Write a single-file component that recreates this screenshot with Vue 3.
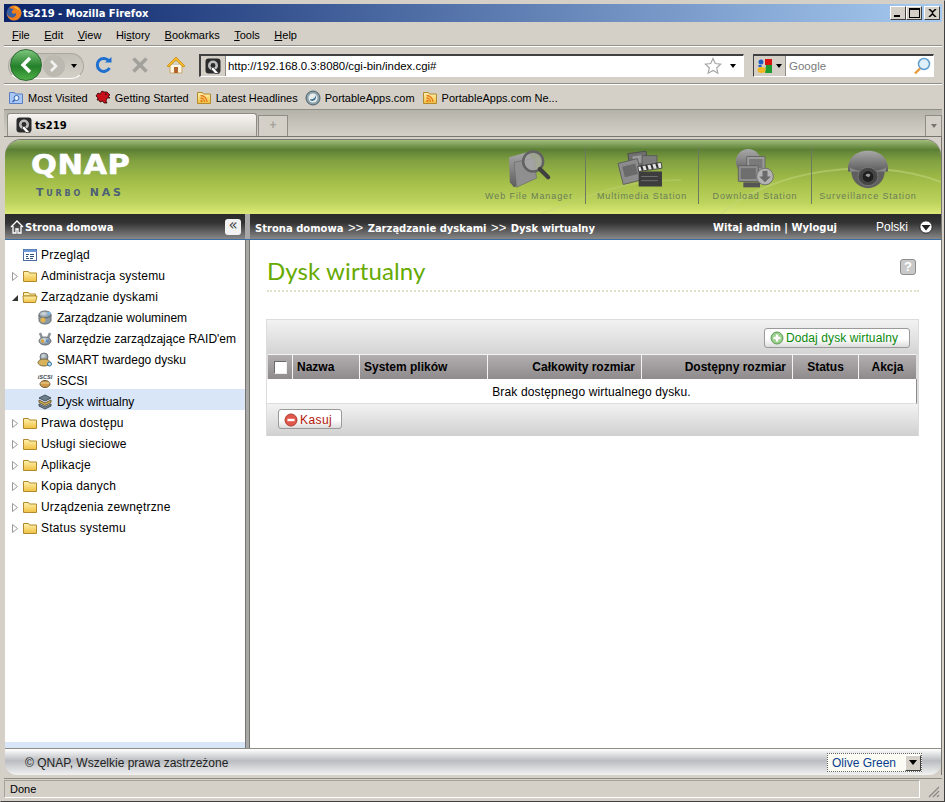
<script setup>
const menus = [
  { label: "File", key: "F", rest: "ile" },
  { label: "Edit", key: "E", rest: "dit" },
  { label: "View", key: "V", rest: "iew" },
  { label: "History", pre: "Hi", key: "s", rest: "tory" },
  { label: "Bookmarks", key: "B", rest: "ookmarks" },
  { label: "Tools", key: "T", rest: "ools" },
  { label: "Help", key: "H", rest: "elp" },
];

const bookmarks = [
  { icon: "i-bluefolder", text: "Most Visited" },
  { icon: "i-dino", text: "Getting Started" },
  { icon: "i-rss", text: "Latest Headlines" },
  { icon: "i-portable", text: "PortableApps.com" },
  { icon: "i-rss", text: "PortableApps.com Ne..." },
];

const stations = [
  { icon: "i-webfile", text: "Web File Manager" },
  { icon: "i-multi", text: "Multimedia Station" },
  { icon: "i-download", text: "Download Station" },
  { icon: "i-camera", text: "Surveillance Station" },
];

// arrow: "" none, "closed", "open"
const tree = [
  { text: "Przegląd", icon: "i-overview", level: 0, arrow: "", top: true },
  { text: "Administracja systemu", icon: "i-folder", level: 0, arrow: "closed" },
  { text: "Zarządzanie dyskami", icon: "i-folderopen", level: 0, arrow: "open" },
  { text: "Zarządzanie woluminem", icon: "i-volume", level: 1 },
  { text: "Narzędzie zarządzające RAID'em", icon: "i-raid", level: 1 },
  { text: "SMART twardego dysku", icon: "i-smart", level: 1 },
  { text: "iSCSI", icon: "i-iscsi", level: 1 },
  { text: "Dysk wirtualny", icon: "i-virtual", level: 1, selected: true },
  { text: "Prawa dostępu", icon: "i-folder", level: 0, arrow: "closed" },
  { text: "Usługi sieciowe", icon: "i-folder", level: 0, arrow: "closed" },
  { text: "Aplikacje", icon: "i-folder", level: 0, arrow: "closed" },
  { text: "Kopia danych", icon: "i-folder", level: 0, arrow: "closed" },
  { text: "Urządzenia zewnętrzne", icon: "i-folder", level: 0, arrow: "closed" },
  { text: "Status systemu", icon: "i-folder", level: 0, arrow: "closed" },
];

const columns = [
  { text: "Nazwa", cls: "left" },
  { text: "System plików", cls: "left" },
  { text: "Całkowity rozmiar", cls: "right" },
  { text: "Dostępny rozmiar", cls: "right" },
  { text: "Status", cls: "mid" },
  { text: "Akcja", cls: "mid" },
];
</script>

<template>
  <div class="win">
    <svg class="defs" width="0" height="0" aria-hidden="true">
      <defs>
        <linearGradient id="g-folder" x1="0" y1="0" x2="0" y2="1">
          <stop offset="0" stop-color="#fff2b0" />
          <stop offset="1" stop-color="#f0c040" />
        </linearGradient>
        <linearGradient id="g-grey" x1="0" y1="0" x2="0" y2="1">
          <stop offset="0" stop-color="#a8a8a8" />
          <stop offset="1" stop-color="#5c5c5c" />
        </linearGradient>
        <radialGradient id="g-disk" cx="0.4" cy="0.35" r="0.7">
          <stop offset="0" stop-color="#d8dfe4" />
          <stop offset="1" stop-color="#6f7f8a" />
        </radialGradient>
      </defs>
      <symbol id="i-folder" viewBox="0 0 16 16">
        <path d="M1.5 3.5h5l1 1.5h7v8.500h-13z" fill="url(#g-folder)" stroke="#b08a2c" />
      </symbol>
      <symbol id="i-folderopen" viewBox="0 0 16 16">
        <path d="M1.5 3.5h5l1 1.5h6v2h-12z" fill="#fff2b0" stroke="#b08a2c" />
        <path d="M1 7h14l-1.5 6.5h-12z" fill="url(#g-folder)" stroke="#b08a2c" />
      </symbol>
      <symbol id="i-overview" viewBox="0 0 16 16">
        <rect x="1.5" y="2.5" width="13" height="11" fill="#fff" stroke="#4a6a9c" />
        <rect x="1.5" y="2.5" width="13" height="2.5" fill="#6f9ad8" />
        <path d="M4 7.500h3M8 7.500h4M4 9.500h2M8 9.500h4M4 11.500h3M8 11.500h3" stroke="#34507c" />
      </symbol>
      <symbol id="i-volume" viewBox="0 0 16 16">
        <ellipse cx="8" cy="4.5" rx="6" ry="3.5" fill="url(#g-disk)" stroke="#6a6f74" />
        <path d="M2 5v5.5c0 2 3 3.5 6 3.5s6-1.5 6-3.5V5c0 2-3 3-6 3S2 7 2 5z" fill="#8a9aa4" stroke="#6a6f74" />
        <circle cx="6" cy="10" r="2.5" fill="#e2b34a" />
        <circle cx="12" cy="3.5" r="1.800" fill="#7eb4e0" />
      </symbol>
      <symbol id="i-raid" viewBox="0 0 16 16">
        <path d="M3 2l2 5M13 2l-2 5" stroke="#8c9298" stroke-width="2.5" />
        <ellipse cx="8" cy="10" rx="6" ry="4" fill="url(#g-disk)" stroke="#6a6f74" />
        <circle cx="5.5" cy="10" r="1.700" fill="#d9a23a" />
        <circle cx="10.5" cy="10" r="1.700" fill="#5f8fc0" />
      </symbol>
      <symbol id="i-smart" viewBox="0 0 16 16">
        <circle cx="7" cy="5" r="4" fill="url(#g-disk)" stroke="#6a6f74" />
        <ellipse cx="7" cy="10.5" rx="6" ry="3.5" fill="#d9b25c" stroke="#7a6a44" />
        <circle cx="12.5" cy="12" r="2" fill="#bfe0f5" stroke="#27709c" />
      </symbol>
      <symbol id="i-iscsi" viewBox="0 0 16 16">
        <ellipse cx="8" cy="11" rx="5" ry="3.5" fill="#cf9a4a" stroke="#6e5a38" />
        <path d="M3.5 10h9" stroke="#f0d79a" />
      </symbol>
      <symbol id="i-virtual" viewBox="0 0 16 16">
        <path d="M8 1l6 3-6 3-6-3z" fill="#6c7f8f" stroke="#465058" />
        <path d="M2 6l6 3 6-3v2.5l-6 3-6-3z" fill="#d8b050" stroke="#6a5a38" />
        <path d="M2 10l6 3 6-3v2l-6 3-6-3z" fill="#7a8a96" stroke="#465058" />
      </symbol>
      <symbol id="i-bluefolder" viewBox="0 0 16 16">
        <path d="M1.5 2.5h5l1 1.500h7v9.500h-13z" fill="#a9c8f5" stroke="#5a7fc0" />
        <circle cx="8.5" cy="8" r="2.5" fill="#e8f2ff" stroke="#3464b0" />
        <path d="M6.5 10l-2 2" stroke="#3464b0" stroke-width="1.5" />
      </symbol>
      <symbol id="i-dino" viewBox="0 0 16 16">
        <path d="M1 6l2-3 2 1 2-3 2 1 3 0 3 3-2 1 2 2-3 0-1 3 1 2-3 0-1-2-3 1-1-2-2 0 1-2z" fill="#c8101a" stroke="#300" stroke-width="0.8" />
        <path d="M10 4l1.5.5" stroke="#111" />
      </symbol>
      <symbol id="i-rss" viewBox="0 0 16 16">
        <path d="M1.5 2.5h5l1 1.500h7v9.500h-13z" fill="url(#g-folder)" stroke="#b08a2c" />
        <circle cx="5.5" cy="11" r="1.200" fill="#e8791a" />
        <path d="M4.5 8a4 4 0 0 1 4 4M4.5 5.500a6.500 6.500 0 0 1 6.500 6.500" fill="none" stroke="#e8791a" stroke-width="1.400" />
      </symbol>
      <symbol id="i-portable" viewBox="0 0 16 16">
        <circle cx="8" cy="8" r="7" fill="#8ea2ab" stroke="#4e616a" />
        <circle cx="8" cy="8" r="4.5" fill="#e8eef0" />
        <path d="M5 9c3 1 5-1 6-4 .5 3-1 6-4 6-1 0-2-1-2-2z" fill="#3b6e8c" />
      </symbol>
      <symbol id="i-qnap" viewBox="0 0 16 16">
        <rect x="0.5" y="0.5" width="15" height="15" rx="3" fill="#2b2b2b" />
        <circle cx="8" cy="7.5" r="5" fill="#bcbcbc" />
        <circle cx="8" cy="7.5" r="2.400" fill="#2b2b2b" />
        <path d="M8 9l6 6.500H10L6 11z" fill="#fff" stroke="#2b2b2b" stroke-width="0.7" />
      </symbol>
      <symbol id="i-webfile" viewBox="0 0 64 48">
        <path d="M8 10l22-6 4 5 4 26-24 11-5-6z" fill="url(#g-grey)" />
        <path d="M14 16l24-5 3 24-24 11z" fill="#8f8f8f" stroke="#666" stroke-width="0.7" />
        <circle cx="37" cy="15" r="12" fill="#a7a7a7" fill-opacity="0.8" stroke="#626262" stroke-width="3" />
        <path d="M45 24l10 10" stroke="#3f3f3f" stroke-width="5" stroke-linecap="round" />
      </symbol>
      <symbol id="i-multi" viewBox="0 0 64 48">
        <rect x="16" y="4" width="22" height="17" transform="rotate(-8 27 12)" fill="#6f6f6f" stroke="#4a4a4a" />
        <rect x="21" y="8" width="12" height="9" transform="rotate(-8 27 12)" fill="#9a9a9a" />
        <rect x="6" y="14" width="24" height="26" transform="rotate(-14 18 27)" fill="#8c8c8c" stroke="#5a5a5a" />
        <rect x="10" y="19" width="16" height="13" transform="rotate(-14 18 27)" fill="#6a6a6a" />
        <rect x="32" y="8" width="18" height="14" fill="#7c7c7c" stroke="#555" />
        <rect x="28" y="27" width="28" height="18" fill="#3d3d3d" />
        <path d="M27 21l28-5 1 7-28 4z" fill="#e4e4e4" stroke="#333" />
        <path d="M31 20l2 6M37 19l2 6M43 18l2 6M49 17l2 6" stroke="#333" stroke-width="2.5" />
        <path d="M31 33h20M31 38h20" stroke="#777" />
      </symbol>
      <symbol id="i-download" viewBox="0 0 64 48">
        <circle cx="24" cy="15" r="15" fill="url(#g-grey)" />
        <rect x="22" y="9" width="22" height="17" rx="1" fill="#9b9b9b" stroke="#5f5f5f" />
        <rect x="25" y="12" width="16" height="11" fill="#7a7a7a" />
        <rect x="12" y="20" width="24" height="19" rx="1" fill="#8e8e8e" stroke="#5a5a5a" />
        <rect x="15" y="23" width="18" height="13" fill="#6e6e6e" />
        <rect x="18" y="40" width="20" height="6" fill="#555" />
        <circle cx="44" cy="33" r="10" fill="#b3b3b3" stroke="#676767" />
        <path d="M41 26h6v7h4l-7 7-7-7h4z" fill="#6a6a6a" />
      </symbol>
      <symbol id="i-camera" viewBox="0 0 64 48">
        <path d="M8 22c0-4 2-8 4-11 4-6 12-9 20-9s16 3 20 9c2 3 4 7 4 11v5H8z" fill="url(#g-grey)" />
        <path d="M10 22c6 4 14 5 22 5s16-1 22-5l-1 6H11z" fill="#8a8a8a" />
        <path d="M12 27h40c0 11-9 20-20 20S12 38 12 27z" fill="#5f5f5f" />
        <ellipse cx="32" cy="33" rx="12" ry="11" fill="#454545" stroke="#7d7d7d" />
        <circle cx="32" cy="33" r="6.500" fill="#1f1f1f" />
        <path d="M29 32a3.500 3.500 0 0 1 6-1l-2 3z" fill="#9e9e9e" />
      </symbol>
    </svg>

    <header class="titlebar">
      <svg class="title-icon" viewBox="0 0 16 16" width="16" height="16">
        <circle cx="8" cy="8" r="7.5" fill="#3a5f9e" />
        <path d="M8 .5c4 0 7.5 3.500 7.5 7.500S12 15.500 8 15.500 1 12 .8 8C1.500 11 4 13 7 12.500c2.500-.5 3.500-2.500 3-4.500C9 9 7 9 6 8c-.5-2 .5-3 2-3.500C6 3.500 4.500 3 3 3.500 4 1.500 6 .5 8 .5z" fill="#ee7d1c" />
        <path d="M8 1.500c3 0 5.500 2 6 5-1-1.500-2.500-2.500-4-3-.8-.8-1.500-1.500-2-2z" fill="#ffc43a" />
      </svg>
      <span class="title-text">ts219 - Mozilla Firefox</span>
      <div class="win-btns">
        <button class="win-btn"><span class="min-glyph"></span></button>
        <button class="win-btn"><span class="max-glyph"></span></button>
        <button class="win-btn close-btn">
          <svg viewBox="0 0 9 8" width="9" height="8"><path d="M1 0l3.500 3L8 0M1 8l3.500-3L8 8M4.500 3v2" fill="none" stroke="#000" stroke-width="1.600" /></svg>
        </button>
      </div>
    </header>

    <nav class="menubar">
      <span v-for="m in menus" :key="m.label" class="menu-item">{{ m.pre }}<u>{{ m.key }}</u>{{ m.rest }}</span>
    </nav>

    <div class="toolbar">
      <div class="backfwd">
        <div class="fwd-pill">
          <div class="fwd-btn">
            <svg viewBox="0 0 10 12" width="10" height="12"><path d="M2 1l5 5-5 5" fill="none" stroke="#f2f2f0" stroke-width="2.6" /></svg>
          </div>
          <span class="mini-arrow"></span>
        </div>
        <div class="back-btn">
          <svg viewBox="0 0 14 18" width="14" height="18"><path d="M11 2L4 9l7 7" fill="none" stroke="#fff" stroke-width="3.4" /></svg>
        </div>
      </div>
      <svg class="tb-icon reload" viewBox="0 0 18 18" width="18" height="18">
        <path d="M14 5A6.500 6.500 0 1 0 14.500 12" fill="none" stroke="#1e6fd0" stroke-width="3" />
        <path d="M10 6.500h6.500V1z" fill="#1e6fd0" />
      </svg>
      <svg class="tb-icon stop" viewBox="0 0 18 18" width="18" height="18">
        <path d="M2.500 2.500l13 13M15.500 2.500l-13 13" stroke="#a3a19b" stroke-width="3.6" />
      </svg>
      <svg class="tb-icon home" viewBox="0 0 20 18" width="20" height="18">
        <path d="M4 9v8h12V9" fill="#fdf6e0" stroke="#c9a86a" />
        <rect x="8" y="11" width="4" height="6" fill="#b4642e" />
        <path d="M1 10l9-9 9 9-2 1-7-7-7 7z" fill="#f2bc2c" stroke="#c98a14" stroke-width="0.8" />
      </svg>
      <div class="urlbar">
        <div class="site-id"><svg width="16" height="16"><use href="#i-qnap" /></svg></div>
        <span class="url-text">http://192.168.0.3:8080/cgi-bin/index.cgi#</span>
        <svg class="star" viewBox="0 0 18 18" width="18" height="18">
          <path d="M9 1.500l2.300 5 5.400.6-4 3.700 1.100 5.400L9 13.500l-4.800 2.700 1.100-5.400-4-3.700 5.400-.6z" fill="#fff" stroke="#a5a5a5" stroke-width="1.2" />
        </svg>
        <span class="mini-arrow url-arrow"></span>
      </div>
      <div class="searchbar">
        <div class="engine">
          <svg viewBox="0 0 16 16" width="16" height="16">
            <circle cx="4" cy="4" r="2.5" fill="#1f5cc4" />
            <path d="M8 1h7v6H8z" fill="#d8140e" />
            <path d="M9 7h6v8H8z" fill="#1f9a30" />
            <ellipse cx="4.500" cy="12" rx="4" ry="3" fill="#f2b61e" />
            <rect x="1.500" y="7" width="3" height="2" fill="#1f5cc4" />
          </svg>
          <span class="mini-arrow"></span>
        </div>
        <span class="search-hint">Google</span>
        <svg class="loupe" viewBox="0 0 18 18" width="18" height="18">
          <circle cx="11" cy="7" r="5.500" fill="#dff0fb" stroke="#5e9fcf" stroke-width="1.5" />
          <path d="M7 11.500l-5 5" stroke="#e69a3c" stroke-width="2.4" />
        </svg>
      </div>
    </div>

    <div class="bookmarks">
      <span v-for="(b, i) in bookmarks" :key="i" class="bookmark">
        <svg width="16" height="16"><use :href="'#' + b.icon" /></svg>
        {{ b.text }}
      </span>
    </div>

    <div class="tabstrip">
      <div class="tab">
        <svg width="16" height="16"><use href="#i-qnap" /></svg>
        <span>ts219</span>
      </div>
      <div class="newtab">+</div>
      <div class="tab-list"><span class="mini-arrow grey"></span></div>
    </div>

    <main class="page">
      <section class="banner">
        <svg class="swoosh" viewBox="0 0 460 74" width="460" height="74">
          <path d="M240 74C290 30 390 15 460 42" fill="none" stroke="#c2d57c" stroke-opacity="0.55" stroke-width="2" />
          <path d="M60 74C110 55 140 40 200 40" fill="none" stroke="#c2d57c" stroke-opacity="0.35" stroke-width="2" />
        </svg>
        <div class="brand">
          <span class="brand-name">QNAP</span>
          <span class="brand-sub">Turbo NAS</span>
        </div>
        <div class="stations">
          <div v-for="s in stations" :key="s.text" class="station">
            <svg class="station-icon" width="64" height="48"><use :href="'#' + s.icon" /></svg>
            <span>{{ s.text }}</span>
          </div>
        </div>
      </section>

      <section class="darkbar">
        <div class="dark-left">
          <svg viewBox="0 0 14 14" width="14" height="14">
            <path d="M1 7l6-6 6 6M3 6v7h3V9h2v4h3V6" fill="none" stroke="#fff" stroke-width="1.3" />
          </svg>
          <strong>Strona domowa</strong>
          <span class="collapse">«</span>
        </div>
        <div class="dark-sep"></div>
        <div class="dark-right">
          <div class="crumbs">
            <strong>Strona domowa</strong><em>&gt;&gt;</em><strong>Zarządzanie dyskami</strong><em>&gt;&gt;</em><strong>Dysk wirtualny</strong>
          </div>
          <strong class="user">Witaj admin | Wyloguj</strong>
          <span class="lang">Polski</span>
          <svg class="lang-arrow" viewBox="0 0 14 14" width="14" height="14">
            <circle cx="7" cy="7" r="6.2" fill="#fff" stroke="#222" />
            <path d="M2.500 5h9L7 10.500z" fill="#222" />
          </svg>
        </div>
      </section>

      <section class="workspace">
        <aside class="sidebar">
          <ul class="tree">
            <li
              v-for="item in tree"
              :key="item.text"
              class="tree-row"
              :class="{ selected: item.selected, sub: item.level === 1, top: item.top }"
            >
              <svg v-if="item.arrow === 'closed'" class="arrow" viewBox="0 0 9 9" width="9" height="9">
                <path d="M1.500 .5l5 4-5 4z" fill="#fff" stroke="#9a9a9a" />
              </svg>
              <svg v-if="item.arrow === 'open'" class="arrow" viewBox="0 0 9 9" width="9" height="9">
                <path d="M1 8h6V2z" fill="#333" />
              </svg>
              <svg width="16" height="16" viewBox="0 0 16 16">
                <use :href="'#' + item.icon" width="16" height="16" />
                <text v-if="item.icon === 'i-iscsi'" x="8" y="5.500" text-anchor="middle" class="iscsi-label">iSCSI</text>
              </svg>
              <span class="tree-text" :class="{ spaced: item.level === 0 }">{{ item.text }}</span>
            </li>
          </ul>
          <div class="side-end"></div>
        </aside>
        <div class="splitter"></div>
        <div class="content">
          <div class="heading">
            <h1>Dysk wirtualny</h1>
            <span class="help">?</span>
          </div>
          <div class="panel">
            <div class="panel-top">
              <button class="btn add">
                <svg viewBox="0 0 14 14" width="14" height="14">
                  <circle cx="7" cy="7" r="6" fill="#9bcf8c" stroke="#5c9a58" />
                  <path d="M7 3.500v7M3.500 7h7" stroke="#fff" stroke-width="2.4" />
                </svg>
                Dodaj dysk wirtualny
              </button>
            </div>
            <div class="grid-head">
              <div class="head-cell check"><span class="checkbox"></span></div>
              <div v-for="c in columns" :key="c.text" class="head-cell" :class="c.cls">{{ c.text }}</div>
            </div>
            <div class="empty-row">Brak dostępnego wirtualnego dysku.</div>
            <div class="panel-bottom">
              <button class="btn del">
                <svg viewBox="0 0 14 14" width="14" height="14">
                  <circle cx="7" cy="7" r="6" fill="#e0584c" stroke="#b03a30" />
                  <path d="M3.500 7h7" stroke="#fff" stroke-width="2.4" />
                </svg>
                Kasuj
              </button>
            </div>
          </div>
        </div>
      </section>

      <footer class="pagefoot">
        <span class="copyright">© QNAP, Wszelkie prawa zastrzeżone</span>
        <div class="theme">
          <span>Olive Green</span>
          <span class="theme-btn"><i class="mini-arrow big"></i></span>
        </div>
      </footer>
    </main>

    <div class="statusbar">
      <div class="status-main">Done</div>
      <div class="grip">
        <svg viewBox="0 0 12 12" width="12" height="12">
          <path d="M11 1L1 11M11 5l-6 6M11 9l-2 2" stroke="#8a8780" stroke-width="1.2" />
        </svg>
      </div>
    </div>
  </div>
</template>

<style>
html,
body {
  margin: 0;
  padding: 0;
  background: #d4d0c8;
}
</style>

<style scoped>
.win {
  width: 945px;
  height: 802px;
  box-sizing: border-box;
  padding: 3px 2px 1px 3px;
  background: #d4d0c8;
  border: 1px solid;
  border-color: #d4d0c8 #404040 #404040 #d4d0c8;
  display: flex;
  flex-direction: column;
  overflow: hidden;
  font-family: "Liberation Sans", Arial, sans-serif;
  font-size: 11px;
  color: #000;
  position: relative;
}

.defs {
  position: absolute;
}

button {
  font-family: inherit;
  padding: 0;
}

.titlebar {
  height: 18px;
  flex: none;
  margin-bottom: 2px;
  display: flex;
  align-items: center;
  background: linear-gradient(90deg, #0a246a, #a6caf0);
  color: #fff;
}

.title-icon {
  margin-left: 2px;
}

.title-text {
  margin-left: 1px;
  font-family: "DejaVu Sans", sans-serif;
  font-size: 10px;
  font-weight: 700;
}

.win-btns {
  margin-left: auto;
  margin-right: 2px;
  display: flex;
}

.win-btn {
  width: 16px;
  height: 14px;
  box-sizing: border-box;
  background: #d4d0c8;
  border: 1px solid;
  border-color: #fff #404040 #404040 #fff;
  position: relative;
  display: flex;
  align-items: center;
  justify-content: center;
}

.close-btn {
  margin-left: 2px;
}

.min-glyph {
  position: absolute;
  left: 3px;
  bottom: 2px;
  width: 6px;
  height: 2px;
  background: #000;
}

.max-glyph {
  width: 9px;
  height: 7px;
  border: 1px solid #000;
  border-top-width: 2px;
}

.menubar {
  height: 21px;
  flex: none;
  display: flex;
  align-items: center;
  padding-left: 8px;
  gap: 14.5px;
  border-bottom: 1px solid #919088;
  box-shadow: 0 1px 0 #fff;
}

.menu-item {
  font-size: 11px;
}

.toolbar {
  height: 36px;
  flex: none;
  margin-top: 1px;
  display: flex;
  align-items: center;
  border-bottom: 1px solid #919088;
  box-shadow: 0 1px 0 #fff;
  position: relative;
}

.backfwd {
  width: 78px;
  height: 28px;
  margin-left: 2px;
  position: relative;
  flex: none;
}

.fwd-pill {
  position: absolute;
  left: 2px;
  top: 2px;
  width: 76px;
  height: 26px;
  box-sizing: border-box;
  border-radius: 13px;
  background: linear-gradient(#c2bfb7, #d4d0c8);
  border: 1px solid #aaa79f;
  border-bottom-color: #fff;
  display: flex;
  align-items: center;
  justify-content: flex-end;
  padding-right: 6px;
  gap: 6px;
}

.fwd-btn {
  width: 22px;
  height: 22px;
  background: #bcb9b1;
  border-radius: 50%;
  display: flex;
  align-items: center;
  justify-content: center;
}

.back-btn {
  position: absolute;
  left: 4px;
  top: 0;
  width: 32px;
  height: 32px;
  margin-top: -2px;
  box-sizing: border-box;
  border-radius: 50%;
  border: 1px solid #2d6b33;
  background: linear-gradient(#7cc47c, #24802a 55%, #4daf46);
  display: flex;
  align-items: center;
  justify-content: center;
}

.mini-arrow {
  width: 0;
  height: 0;
  display: inline-block;
  border: 3px solid transparent;
  border-top: 4px solid #000;
  border-bottom: 0;
}

.mini-arrow.grey {
  border-top-color: #77756e;
}

.mini-arrow.big {
  border-width: 5px 4px 0;
}

.tb-icon {
  flex: none;
}

.reload {
  margin-left: 11px;
}

.stop {
  margin-left: 18px;
}

.home {
  margin-left: 17px;
}

.urlbar {
  width: 545px;
  height: 23px;
  flex: none;
  margin-left: 13px;
  box-sizing: border-box;
  display: flex;
  align-items: center;
  background: #fff;
  border: 1px solid;
  border-color: #404040 #fff #fff #404040;
  border-width: 2px 1px 1px 2px;
}

.site-id {
  width: 24px;
  height: 100%;
  display: flex;
  align-items: center;
  justify-content: center;
  background: #d4d0c8;
  border-right: 1px solid #8f8c85;
}

.url-text {
  margin-left: 2px;
  font-size: 11.4px;
  flex: 1;
}

.star {
  margin-right: 8px;
}

.url-arrow {
  margin-right: 7px;
}

.searchbar {
  width: 181px;
  height: 23px;
  flex: none;
  margin-left: 9px;
  box-sizing: border-box;
  display: flex;
  align-items: center;
  background: #fff;
  border: solid;
  border-color: #404040 #fff #fff #404040;
  border-width: 2px 1px 1px 1px;
}

.engine {
  width: 32px;
  height: 100%;
  box-sizing: border-box;
  display: flex;
  align-items: center;
  gap: 3px;
  padding-left: 3px;
  background: #d4d0c8;
  border-right: 1px solid #8f8c85;
}

.search-hint {
  margin-left: 3px;
  color: #7a7a7a;
  font-size: 11.5px;
  flex: 1;
}

.loupe {
  margin-right: 2px;
}

.bookmarks {
  height: 26px;
  flex: none;
  box-sizing: border-box;
  padding: 2px 0 0 4px;
  display: flex;
  align-items: center;
  gap: 7px;
  border-bottom: 1px solid #919088;
}

.bookmark {
  display: flex;
  align-items: center;
  gap: 4px;
}

.tabstrip {
  height: 27px;
  flex: none;
  display: flex;
  align-items: flex-end;
  background: linear-gradient(#b5b2aa, #c8c5bd 60%, #d4d0c8);
  position: relative;
  border-bottom: 1px solid #77756e;
  box-sizing: border-box;
}

.tab {
  width: 250px;
  height: 23px;
  margin-left: 3px;
  box-sizing: border-box;
  display: flex;
  align-items: center;
  gap: 3px;
  padding-left: 8px;
  border: 1px solid #8f8c85;
  border-bottom: 0;
  border-radius: 3px 3px 0 0;
  background: linear-gradient(#f6f5f2, #d4d0c8);
  font-family: "DejaVu Sans", sans-serif;
  font-weight: 700;
  font-size: 10px;
}

.newtab {
  width: 30px;
  height: 21px;
  box-sizing: border-box;
  margin-left: 1px;
  border: 1px solid #8f8c85;
  border-bottom: 0;
  background: #d4d0c8;
  color: #a5a29a;
  font-size: 12px;
  font-weight: 700;
  line-height: 19px;
  text-align: center;
}

.tab-list {
  margin-left: auto;
  width: 17px;
  height: 21px;
  box-sizing: border-box;
  border: 1px solid #8f8c85;
  border-bottom: 0;
  background: #d4d0c8;
  display: flex;
  align-items: center;
  justify-content: center;
}

.page {
  flex: 1;
  min-height: 0;
  display: flex;
  flex-direction: column;
  margin-left: 1px;
  border-right: 1px solid #77756e;
  background: #d4d0c8;
}

.banner {
  height: 74px;
  flex: none;
  margin-top: 3px;
  display: flex;
  border-radius: 16px 16px 0 0;
  box-shadow: 0 -1px 0 #7b7b73;
  background: linear-gradient(#a0bd7a 0, #5c7f36 13%, #81a040 28%, #a2bd48 55%, #bdd45c 85%, #dde878 100%);
  position: relative;
  overflow: hidden;
}

.swoosh {
  position: absolute;
  right: 0;
  top: 0;
}

.brand {
  display: flex;
  flex-direction: column;
  padding-left: 26px;
  padding-top: 12px;
  position: relative;
}

.brand-name {
  font-family: "DejaVu Sans", sans-serif;
  font-weight: 700;
  font-size: 26px;
  line-height: 26px;
  letter-spacing: 0.5px;
  color: #fff;
  text-shadow: 0 0 1px #bcdcff;
  transform: scaleX(1.17);
  transform-origin: left center;
  -webkit-text-stroke: 0.4px #fff;
}

.brand-sub {
  margin-top: 9px;
  margin-left: 5px;
  font-family: "DejaVu Sans", sans-serif;
  font-variant: small-caps;
  font-size: 11px;
  line-height: 12px;
  letter-spacing: 2.8px;
  color: #4d6076;
  font-weight: 700;
  white-space: nowrap;
}

.stations {
  margin-left: auto;
  margin-right: 17px;
  display: flex;
  padding-top: 8px;
  position: relative;
}

.station {
  width: 112px;
  height: 56px;
  display: flex;
  flex-direction: column;
  align-items: center;
  justify-content: flex-end;
  font-size: 9px;
  letter-spacing: 0.9px;
  color: #6b7d58;
  white-space: nowrap;
  position: relative;
  border-left: 1px solid #6d7a62;
}

.station:first-child {
  border-left: 0;
}

.station span {
  line-height: 11px;
  margin-bottom: 2px;
}

.station-icon {
  position: absolute;
  left: 24px;
  top: 1px;
  height: 40px;
}

.darkbar {
  height: 26px;
  flex: none;
  display: flex;
  color: #fff;
  background: linear-gradient(#2a2a2a 0, #333 35%, #888 100%);
  border-bottom: 1px solid #3c6ea5;
  box-sizing: border-box;
  font-family: "DejaVu Sans", sans-serif;
  font-size: 10px;
}

.dark-left {
  width: 240px;
  flex: none;
  display: flex;
  align-items: center;
  padding: 1px 0 0 5px;
  gap: 1px;
  box-sizing: border-box;
}

.collapse {
  margin-left: auto;
  margin-right: 4px;
  width: 16px;
  height: 16px;
  border-radius: 3px;
  background: #f2f2f2;
  color: #444;
  font-size: 15px;
  line-height: 12px;
  text-align: center;
}

.dark-sep {
  width: 5px;
  background: #a8a8a8;
  flex: none;
}

.dark-right {
  flex: 1;
  display: flex;
  align-items: center;
  padding: 1px 8px 0 5px;
}

.crumbs em {
  font-style: normal;
  font-family: "Liberation Sans", sans-serif;
  font-size: 13px;
  margin: 0 4.5px;
}

.user {
  margin-left: auto;
  margin-right: 1px;
}

.lang {
  margin-left: 38px;
  font-family: "Liberation Sans", sans-serif;
  font-size: 12px;
}

.lang-arrow {
  margin-left: 11px;
}

.workspace {
  flex: 1;
  min-height: 0;
  display: flex;
  background: #fff;
}

.sidebar {
  width: 240px;
  flex: none;
  display: flex;
  flex-direction: column;
  justify-content: space-between;
}

.tree {
  list-style: none;
  margin: 0;
  padding: 2px 0 0;
}

.tree-row {
  height: 21px;
  box-sizing: border-box;
  display: flex;
  align-items: center;
  font-size: 12px;
  padding: 5px 0 0 6px;
}

.tree-row.sub {
  padding-left: 32px;
}

.tree-row.top {
  padding-left: 17px;
}

.tree-row.selected {
  background: #d9e6f7;
}

.arrow {
  flex: none;
  margin-right: 2px;
}

.iscsi-label {
  font-size: 5.5px;
  font-style: italic;
  font-weight: 700;
  font-family: "Liberation Sans", sans-serif;
  fill: #3c4650;
}

.tree-text {
  margin-left: 3px;
  white-space: nowrap;
}

.tree-row.sub .tree-text {
  margin-left: 4px;
}

.tree-text.spaced {
  letter-spacing: 0.2px;
}

.side-end {
  height: 6px;
  background: #d9e6f7;
}

.splitter {
  width: 5px;
  flex: none;
  background: #a8a8a8;
  border-left: 1px solid #77756e;
  border-right: 1px solid #77756e;
  box-sizing: border-box;
}

.content {
  flex: 1;
  padding: 0 22px 0 16px;
  min-width: 0;
}

.heading {
  height: 50px;
  display: flex;
  align-items: flex-start;
  justify-content: space-between;
  border-bottom: 2px dotted #e2e2c8;
  margin-left: 1px;
}

h1 {
  margin: 15px 0 0;
  font-family: Lato, sans-serif;
  font-weight: 400;
  font-size: 24px;
  line-height: 32px;
  color: #66aa00;
  letter-spacing: 0.1px;
}

.help {
  margin: 19px 3px 0 0;
  width: 16px;
  height: 16px;
  box-sizing: border-box;
  border: 1px solid #8c8c8c;
  border-radius: 3px;
  background: #c9c9c9;
  color: #fff;
  font-weight: 700;
  font-size: 13px;
  line-height: 14px;
  text-align: center;
}

.panel {
  margin-top: 27px;
  border: 1px solid #dcdcdc;
  border-bottom: 0;
  background: #ddd;
  color: #000;
}

.panel-top {
  height: 34px;
  box-sizing: border-box;
  display: flex;
  justify-content: flex-end;
  padding: 8px 8px 0 0;
  background: linear-gradient(#f2f2f2, #d4d4d4);
}

.grid-head {
  height: 25px;
  margin: 0 1px;
  display: grid;
  grid-template-columns: 24px 67px 128px 154px 151px 66px 58px;
}

.head-cell {
  display: flex;
  align-items: center;
  background: linear-gradient(#b3afb0, #8f8b8d);
  border-left: 1px solid #f4f4f4;
  border-top: 1px solid #f4f4f4;
  box-sizing: border-box;
  font-weight: 700;
  font-size: 12px;
  white-space: nowrap;
}

.head-cell.check {
  border-left: 0;
  justify-content: center;
}

.head-cell.left {
  padding-left: 4px;
}

.head-cell.right {
  justify-content: flex-end;
  padding-right: 6px;
}

.head-cell.mid {
  justify-content: center;
}

.checkbox {
  width: 13px;
  height: 13px;
  box-sizing: border-box;
  background: #fff;
  border: 1px solid #6a6a6a;
  border-right-color: #eee;
  border-bottom-color: #eee;
}

.empty-row {
  height: 25px;
  margin-right: 1px;
  padding-top: 2px;
  background: #fff;
  border-right: 1px solid #8f8b8d;
  border-bottom: 1px solid #ddd;
  box-sizing: border-box;
  display: flex;
  align-items: center;
  justify-content: center;
  font-size: 12px;
  letter-spacing: 0.15px;
}

.panel-bottom {
  height: 32px;
  box-sizing: border-box;
  padding: 5px 0 0 11px;
  background: linear-gradient(#f2f2f2, #d0d0d0);
}

.btn {
  height: 20px;
  box-sizing: border-box;
  display: inline-flex;
  align-items: center;
  gap: 2px;
  border: 1px solid #9a9a9a;
  border-radius: 3px;
  background: linear-gradient(#fff 55%, #dcdcdc);
  font-size: 12px;
  padding: 0 5px;
  white-space: nowrap;
}

.btn.add {
  width: 146px;
  color: #0a8a0a;
  letter-spacing: 0.1px;
}

.btn.del {
  width: 64px;
  color: #b5160c;
  letter-spacing: 0.4px;
  padding-top: 1px;
}

.pagefoot {
  height: 27px;
  flex: none;
  display: flex;
  align-items: center;
  padding-top: 1px;
  border-radius: 0 0 12px 12px;
  background: linear-gradient(#fff, #b9bcc0 45%, #f2f2f2);
  border-top: 1px solid #8f8c85;
  box-sizing: border-box;
}

.copyright {
  margin-left: 20px;
  font-size: 12px;
  color: #222;
}

.theme {
  margin-left: auto;
  margin-right: 19px;
  width: 95px;
  height: 19px;
  box-sizing: border-box;
  display: flex;
  align-items: center;
  justify-content: space-between;
  border: 1px dotted #666;
  background: #fbfbf3;
  color: #0a3d8f;
  font-size: 12px;
  padding-left: 4px;
}

.theme-btn {
  width: 16px;
  height: 16px;
  box-sizing: border-box;
  background: #d4d0c8;
  border: 1px solid;
  border-color: #fff #404040 #404040 #fff;
  display: flex;
  align-items: center;
  justify-content: center;
}

.statusbar {
  height: 22px;
  flex: none;
  margin-top: 3px;
  display: flex;
  border-top: 1px solid #8f8c85;
  box-sizing: border-box;
  padding: 1px 0 2px;
}

.status-main {
  flex: 1;
  border: 1px solid;
  border-color: #a5a29a #fff #fff #a5a29a;
  padding-left: 5px;
  line-height: 16px;
  font-size: 11px;
}

.grip {
  width: 20px;
  display: flex;
  align-items: flex-end;
  justify-content: flex-end;
  padding-right: 2px;
}
</style>
